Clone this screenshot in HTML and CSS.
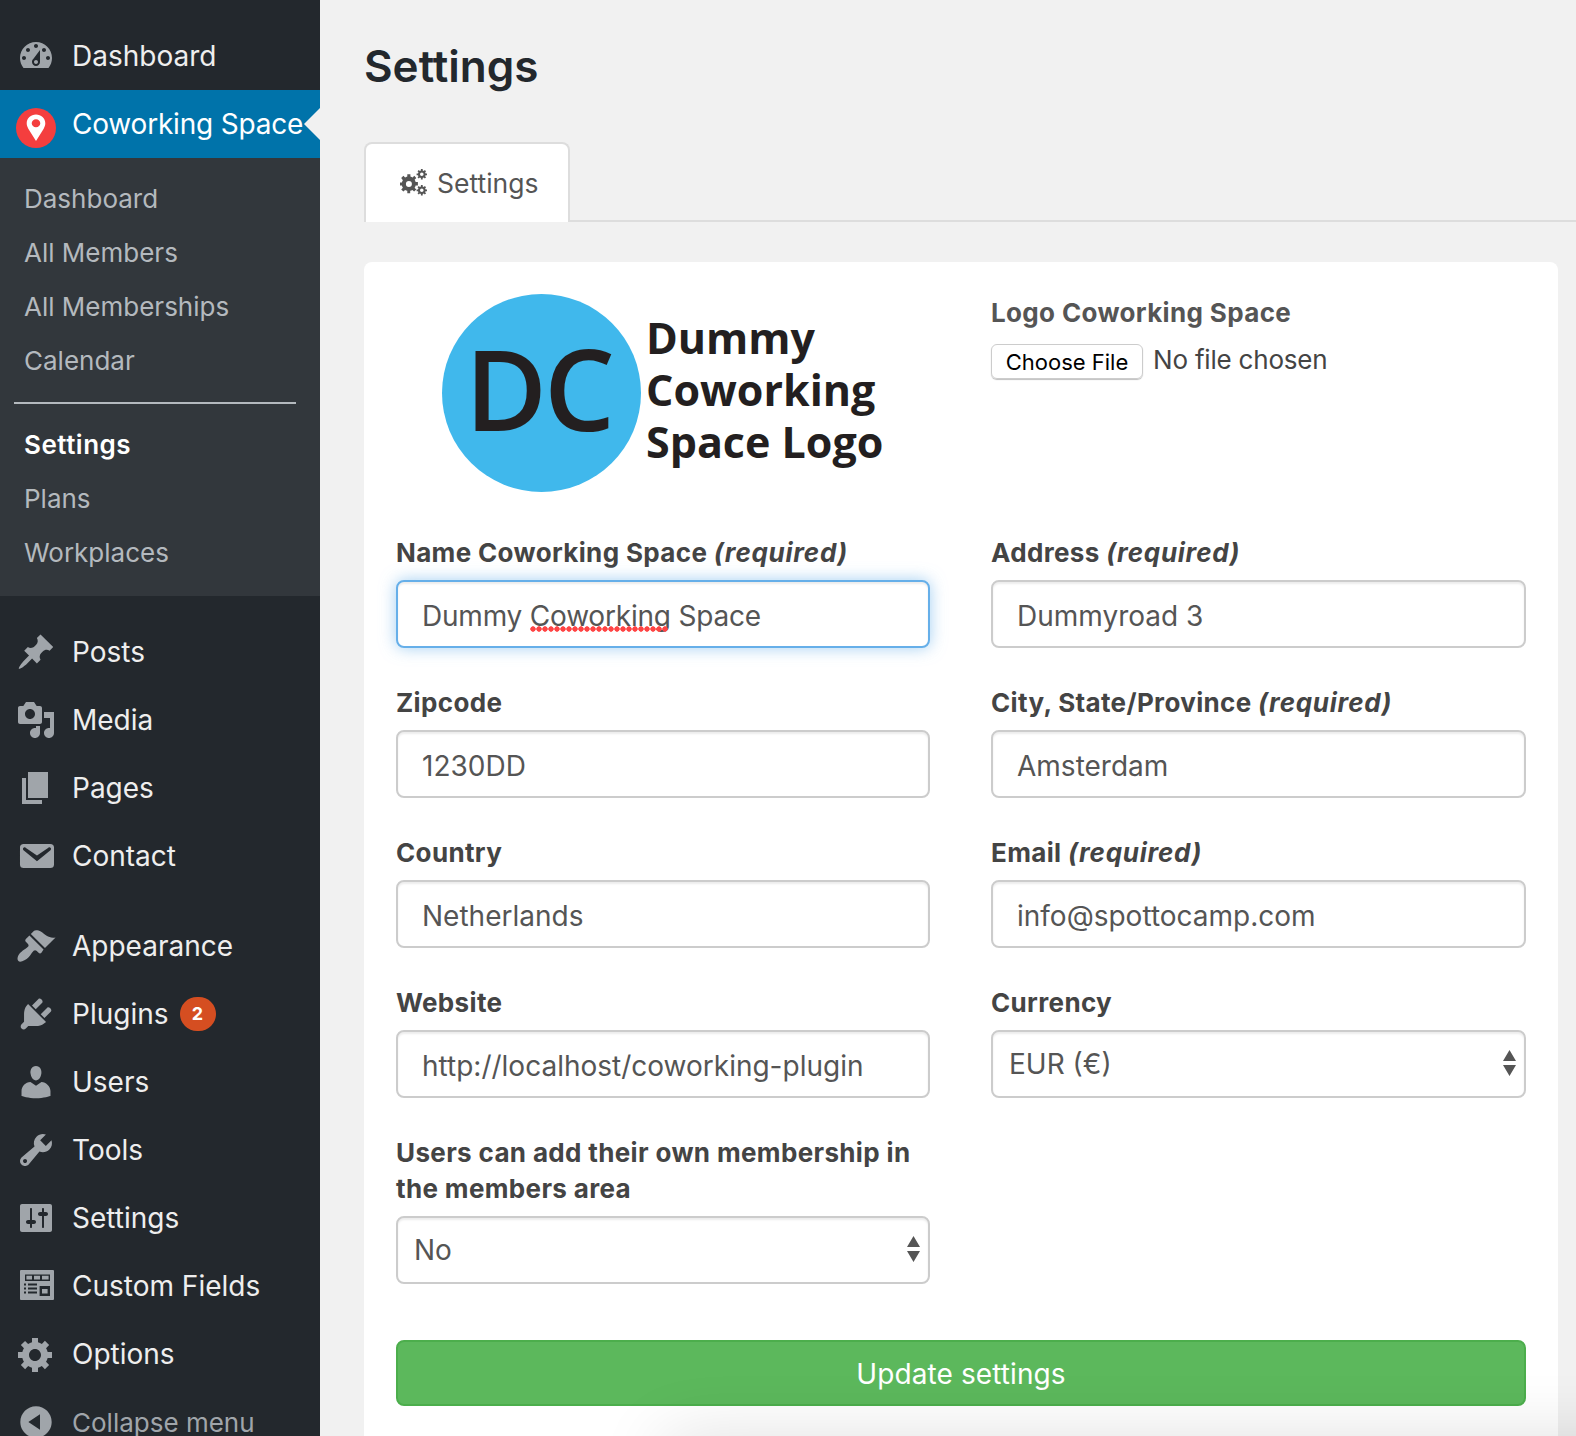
FILE: index.html
```html
<!DOCTYPE html>
<html lang="en">
<head>
    <meta charset="UTF-8">
    <title>Settings - Coworking Space</title>
    <link rel="stylesheet" href="styles.css">
</head>
<body>
    <nav class="sidebar">
        <a class="menu-item">
            <svg class="menu-icon" viewBox="0 0 20 20"><path fill-rule="evenodd" d="M3.76 16h12.48c1.1-1.37 1.76-3.11 1.76-5 0-4.42-3.58-8-8-8s-8 3.58-8 8c0 1.89.66 3.63 1.76 5zM10 4c.55 0 1 .45 1 1s-.45 1-1 1-1-.45-1-1 .45-1 1-1zM6 6c.55 0 1 .45 1 1s-.45 1-1 1-1-.45-1-1 .45-1 1-1zm8 0c.55 0 1 .45 1 1s-.45 1-1 1-1-.45-1-1 .45-1 1-1zm-5.37 5.55L12 7v6c0 1.1-.9 2-2 2s-2-.9-2-2c0-.57.24-1.08.63-1.45zM4 10c.55 0 1 .45 1 1s-.45 1-1 1-1-.45-1-1 .45-1 1-1zm12 0c.55 0 1 .45 1 1s-.45 1-1 1-1-.45-1-1 .45-1 1-1zm-5 3c0-.55-.45-1-1-1s-1 .45-1 1 .45 1 1 1 1-.45 1-1z"/></svg>
            Dashboard
        </a>
        <a class="menu-item active">
            <svg class="menu-icon pin-icon" viewBox="0 0 40 40"><circle class="pin-bg" cx="20" cy="20" r="20"/><path class="pin" fill-rule="evenodd" d="M20 6.500c-5.100 0-9.300 3.900-9.300 8.800 0 2 .7 3.700 1.600 5.400L20 33l7.700-12.300c.9-1.700 1.600-3.400 1.600-5.400 0-4.900-4.200-8.800-9.300-8.800zm0 4.700c2.400 0 4.300 1.800 4.300 4s-1.900 4-4.300 4-4.300-1.800-4.300-4 1.900-4 4.300-4z"/></svg>
            Coworking Space
        </a>
        <div class="submenu">
            <a class="sub-item">Dashboard</a>
            <a class="sub-item">All Members</a>
            <a class="sub-item">All Memberships</a>
            <a class="sub-item">Calendar</a>
            <div class="sub-divider"></div>
            <a class="sub-item current">Settings</a>
            <a class="sub-item">Plans</a>
            <a class="sub-item">Workplaces</a>
        </div>
        <div class="menu-group">
            <a class="menu-item">
                <svg class="menu-icon" viewBox="0 0 20 20"><path d="M10.44 3.02l1.82-1.820 6.360 6.350-1.830 1.820c-1.050-.68-2.480-.57-3.410.36l-.75.75c-.92.93-1.040 2.350-.35 3.410l-1.830 1.820-2.410-2.410-2.800 2.790c-.42.42-3.380 2.710-3.800 2.290s1.860-3.390 2.280-3.810l2.790-2.790L4.100 9.360l1.830-1.820c1.050.69 2.480.57 3.400-.36l.75-.75c.93-.92 1.050-2.350.36-3.410z"/></svg>
                Posts
            </a>
            <a class="menu-item">
                <svg class="menu-icon" viewBox="0 0 20 20"><path fill-rule="evenodd" d="M13 11V4c0-.55-.45-1-1-1h-1.670L9 1H5L3.670 3H2c-.55 0-1 .45-1 1v7c0 .55.45 1 1 1h10c.55 0 1-.45 1-1zM7 4.500c1.380 0 2.500 1.120 2.500 2.500S8.380 9.500 7 9.500 4.500 8.380 4.500 7 5.620 4.500 7 4.500zM14 6h5v10.500c0 1.380-1.120 2.500-2.500 2.500S14 17.880 14 16.500s1.120-2.500 2.500-2.500c.17 0 .34.02.5.05V9h-3V6zm-4 8.050V13h2v3.500c0 1.380-1.120 2.500-2.500 2.500S7 17.880 7 16.500 8.120 14 9.500 14c.17 0 .34.02.5.05z"/></svg>
                Media
            </a>
            <a class="menu-item">
                <svg class="menu-icon" viewBox="0 0 20 20"><path d="M6 15V2h10v13H6zm-1 1h8v2H3V5h2v11z"/></svg>
                Pages
            </a>
            <a class="menu-item">
                <svg class="menu-icon" viewBox="0 0 20 20"><path d="M3.870 4h13.250C18.370 4 19 4.590 19 5.790v8.420c0 1.190-.63 1.790-1.880 1.790H3.870c-1.250 0-1.880-.6-1.880-1.790V5.790c0-1.200.63-1.790 1.880-1.790zm6.620 8.600l6.740-5.530c.24-.2.43-.66.13-1.070-.29-.41-.82-.42-1.170-.17l-5.700 3.860L4.800 5.830c-.35-.25-.88-.24-1.170.17-.3.41-.11.87.13 1.070z"/></svg>
                Contact
            </a>
        </div>
        <div class="menu-group">
            <a class="menu-item">
                <svg class="menu-icon" viewBox="0 0 20 20"><path d="M14.480 11.060L7.410 3.990l1.500-1.500c.5-.56 2.300-.47 3.510.32 1.210.8 1.430 1.280 2.910 2.100 1.180.64 2.450 1.260 4.450.85zm-.71.71L6.700 4.700 4.930 6.470c-.39.39-.39 1.020 0 1.410l1.060 1.060c.39.39.39 1.030 0 1.420-.6.6-1.430 1.110-2.210 1.690-.35.26-.7.53-1.010.84C1.430 13.710.05 16.360 1.200 17.510c.96.96 3.600-.42 5.100-1.920.31-.31.58-.66.84-1.010.58-.78 1.090-1.610 1.690-2.210.39-.39 1.020-.39 1.410 0l1.060 1.060c.39.39 1.020.39 1.410 0z"/></svg>
                Appearance
            </a>
            <a class="menu-item">
                <svg class="menu-icon" viewBox="0 0 20 20"><path d="M13.110 4.360L9.870 7.600 8 5.730l3.240-3.240c.35-.34 1.050-.2 1.560.32.52.51.66 1.210.31 1.550zm-8 1.770l.91-1.120 9.010 9.010-1.190.84c-.71.71-2.630 1.160-3.820 1.160H6.140L4.900 17.260c-.59.59-1.540.59-2.120 0-.59-.58-.59-1.530 0-2.120l1.240-1.240v-3.880c0-1.130.4-3.190 1.090-3.890zm7.260 3.970l3.240-3.240c.34-.35 1.040-.21 1.550.31.52.51.66 1.210.31 1.550l-3.240 3.250z"/></svg>
                Plugins <span class="badge">2</span>
            </a>
            <a class="menu-item">
                <svg class="menu-icon" viewBox="0 0 20 20"><path d="M10 9.250c-2.270 0-2.730-3.440-2.730-3.440C7 4.020 7.820 2 9.970 2c2.160 0 2.980 2.020 2.710 3.810 0 0-.41 3.440-2.680 3.440zm0 2.570L12.720 10c2.390 0 4.520 2.330 4.520 4.530v2.490s-3.650 1.130-7.240 1.130c-3.650 0-7.240-1.130-7.240-1.130v-2.490c0-2.250 1.940-4.480 4.470-4.480z"/></svg>
                Users
            </a>
            <a class="menu-item">
                <svg class="menu-icon" viewBox="0 0 20 20"><path fill-rule="evenodd" d="M16.680 9.770c-1.340 1.340-3.300 1.670-4.950.99l-5.410 6.520c-.99.99-2.590.99-3.580 0s-.99-2.590 0-3.570l6.520-5.420c-.68-1.650-.35-3.610.99-4.950 1.280-1.280 3.120-1.620 4.720-1.060l-2.890 2.890 2.820 2.820 2.860-2.870c.53 1.580.18 3.390-1.080 4.650zM3.810 16.210c.4.39 1.040.39 1.430 0 .4-.4.4-1.040 0-1.430-.39-.4-1.030-.4-1.430 0-.39.39-.39 1.030 0 1.430z"/></svg>
                Tools
            </a>
            <a class="menu-item">
                <svg class="menu-icon" viewBox="0 0 20 20"><path fill-rule="evenodd" d="M18 16V4c0-.55-.45-1-1-1H3c-.55 0-1 .45-1 1v12c0 .55.45 1 1 1h14c.55 0 1-.45 1-1zM8 11h1c.55 0 1 .45 1 1s-.45 1-1 1H8v1.500c0 .28-.22.5-.5.5s-.5-.22-.5-.5V13H6c-.55 0-1-.45-1-1s.45-1 1-1h1V5.500c0-.28.22-.5.5-.5s.5.22.5.5V11zm5-2h-1c-.55 0-1-.45-1-1s.45-1 1-1h1V5.500c0-.28.22-.5.5-.5s.5.22.5.5V7h1c.55 0 1 .45 1 1s-.45 1-1 1h-1v5.500c0 .28-.22.5-.5.5s-.5-.22-.5-.5V9z"/></svg>
                Settings
            </a>
            <a class="menu-item">
                <svg class="menu-icon" viewBox="0 0 20 20"><path fill-rule="evenodd" d="M2.500 2h16a.5.5 0 0 1 .5.5v14a.5.5 0 0 1-.5.5h-16a.5.5 0 0 1-.5-.5v-14a.5.5 0 0 1 .5-.5zM4.500 4.200v3.300H17V4.200zm.7.7h2.800v1.900H5.200zm3.800 0h3v1.900H9zm4 0h3.300v1.900H13zM4 8.800v.9h1v-.9zm2 0v.9h4.500v-.9zM4 10.800v.9h1v-.9zm2 0v.9h4.500v-.9zM4 12.800v.9h1v-.9zm2 0v.9h4.500v-.9zM11.800 10v5H17v-5zm1.200 1.500h2.800v2.200H13z"/></svg>
                Custom Fields
            </a>
            <a class="menu-item">
                <svg class="menu-icon" viewBox="0 0 20 20"><path fill-rule="evenodd" d="M18 12h-2.180c-.17.7-.44 1.350-.81 1.930l1.540 1.540-2.100 2.100-1.540-1.540c-.58.36-1.230.63-1.910.79V19H8v-2.180c-.68-.16-1.330-.43-1.910-.79l-1.540 1.540-2.120-2.120 1.540-1.540c-.36-.58-.63-1.230-.79-1.910H1V9.030h2.170c.16-.7.44-1.350.8-1.940L2.430 5.550l2.100-2.100 1.540 1.540c.58-.37 1.240-.64 1.930-.81V2h3v2.180c.68.16 1.330.43 1.910.79l1.540-1.540 2.120 2.120-1.540 1.540c.36.59.64 1.240.8 1.940H18V12zm-8.500 1.500c1.660 0 3-1.340 3-3s-1.340-3-3-3-3 1.340-3 3 1.340 3 3 3z"/></svg>
                Options
            </a>
            <a class="menu-item collapse">
                <svg class="menu-icon" viewBox="0 0 20 20"><path fill-rule="evenodd" d="M10 2.160c4.330 0 7.840 3.510 7.840 7.840s-3.510 7.840-7.840 7.840S2.160 14.330 2.160 10 5.710 2.160 10 2.160zm2 11.720V6.120L6.180 9.970z"/></svg>
                Collapse menu
            </a>
        </div>
    </nav>

    <main class="content">
        <h1 class="page-title">Settings</h1>

        <div class="tabs">
            <a class="tab">
                <svg class="tab-icon" viewBox="0 0 28 28">
                    <path fill-rule="evenodd" d="M17.900 16.500h-2.300c-.2.900-.5 1.600-1 2.200l1.700 1.700-2.200 2.200-1.700-1.700c-.6.400-1.400.7-2.200.9v2.400H7.300v-2.400c-.8-.2-1.600-.5-2.200-.9l-1.700 1.700-2.200-2.200 1.700-1.700c-.5-.6-.8-1.300-1-2.200H0v-3.100h1.900c.2-.8.5-1.600 1-2.200L1.200 9l2.200-2.200 1.700 1.700c.6-.4 1.400-.7 2.200-.9V5.300h3.100v2.300c.8.2 1.600.5 2.200.9l1.700-1.700L16.300 9l-1.700 1.700c.5.600.8 1.400 1 2.200h2.300zM8.900 18a3 3 0 1 0 0-6 3 3 0 0 0 0 6z"/>
                    <path fill-rule="evenodd" d="M27 6.200h-1.400c-.1.400-.3.800-.5 1.100l1 1-1.300 1.300-1-1c-.3.200-.7.400-1.100.5v1.400h-1.800V9.100c-.4-.1-.8-.3-1.100-.5l-1 1-1.300-1.300 1-1c-.2-.3-.4-.7-.5-1.100h-1.400V4.400h1.400c.1-.4.300-.8.500-1.100l-1-1L18.800 1l1 1c.3-.2.7-.4 1.100-.5V.1h1.800v1.400c.4.1.8.300 1.100.5l1-1 1.300 1.300-1 1c.2.300.4.700.5 1.100H27zm-5.200.9a1.800 1.800 0 1 0 0-3.600 1.800 1.800 0 0 0 0 3.600z"/>
                    <path fill-rule="evenodd" d="M27 22.200h-1.400c-.1.400-.3.800-.5 1.100l1 1-1.300 1.300-1-1c-.3.200-.7.400-1.100.5v1.400h-1.800v-1.400c-.4-.1-.8-.3-1.100-.5l-1 1-1.300-1.300 1-1c-.2-.3-.4-.7-.5-1.100h-1.400v-1.800h1.400c.1-.4.300-.8.500-1.100l-1-1 1.300-1.300 1 1c.3-.2.7-.4 1.100-.5v-1.400h1.800v1.400c.4.1.8.300 1.100.5l1-1 1.300 1.300-1 1c.2.300.4.700.5 1.100H27zm-5.200.9a1.800 1.800 0 1 0 0-3.600 1.800 1.800 0 0 0 0 3.600z"/>
                </svg>
                Settings
            </a>
        </div>

        <form class="card">
            <div class="form-grid">
                <div class="logo">
                    <div class="logo-mark">DC</div>
                    <div class="logo-text">Dummy<br>Coworking<br>Space Logo</div>
                </div>
                <div class="field field-logo">
                    <label>Logo Coworking Space</label>
                    <div class="file-row">
                        <span class="file-button">Choose File</span>
                        <span class="file-name">No file chosen</span>
                    </div>
                </div>

                <div class="field">
                    <label>Name Coworking Space <em>(required)</em></label>
                    <div class="control">
                        <input class="focused" type="text" value="Dummy Coworking Space">
                        <span class="squiggle"></span>
                    </div>
                </div>
                <div class="field">
                    <label>Address <em>(required)</em></label>
                    <input type="text" value="Dummyroad 3">
                </div>

                <div class="field">
                    <label>Zipcode</label>
                    <input type="text" value="1230DD">
                </div>
                <div class="field">
                    <label>City, State/Province <em>(required)</em></label>
                    <input type="text" value="Amsterdam">
                </div>

                <div class="field">
                    <label>Country</label>
                    <input type="text" value="Netherlands">
                </div>
                <div class="field">
                    <label>Email <em>(required)</em></label>
                    <input type="text" value="info@spottocamp.com">
                </div>

                <div class="field">
                    <label>Website</label>
                    <input type="text" value="http://localhost/coworking-plugin">
                </div>
                <div class="field">
                    <label>Currency</label>
                    <div class="control">
                        <select><option>EUR (€)</option></select>
                        <svg class="select-arrows" viewBox="0 0 13 26"><path d="M6.500 0L13 11H0zM0 15h13L6.500 26z"/></svg>
                    </div>
                </div>

                <div class="field">
                    <label>Users can add their own membership in the members area</label>
                    <div class="control">
                        <select><option>No</option></select>
                        <svg class="select-arrows" viewBox="0 0 13 26"><path d="M6.500 0L13 11H0zM0 15h13L6.500 26z"/></svg>
                    </div>
                </div>
            </div>

            <button type="button" class="submit-btn">Update settings</button>
        </form>
    </main>
    <div class="window-shade"></div>
</body>
</html>
```

FILE: styles.css
```css
* {
    box-sizing: border-box;
}
html, body {
    height: 1436px;
    overflow: hidden;
}
body {
    position: relative;
    margin: 0;
    display: flex;
    background: #f1f1f1;
    font-family: Inter, "Liberation Sans", sans-serif;
    color: #444;
}

/* sidebar */
.sidebar {
    width: 320px;
    height: 1436px;
    overflow: hidden;
    flex: none;
    background: #23282d;
    padding-top: 22px;
}
.menu-item {
    position: relative;
    display: flex;
    align-items: center;
    height: 68px;
    padding-left: 16px;
    font-size: 28px;
    color: #eee;
    white-space: nowrap;
}
.menu-icon {
    width: 40px;
    height: 40px;
    margin-right: 16px;
    fill: #a0a5aa;
    flex: none;
}
.pin-icon {
    margin-top: 8px;
}
.menu-item.active {
    background: #0073aa;
    color: #fff;
    letter-spacing: -0.2px;
}
.menu-item.active::after {
    content: "";
    position: absolute;
    right: 0;
    top: 18px;
    border: 16px solid transparent;
    border-left: 0;
    border-right-color: #f1f1f1;
}
.pin-bg {
    fill: #f43e3e;
}
.pin {
    fill: #fff;
}
.menu-item.collapse {
    color: #a0a5aa;
    font-size: 26px;
}
.menu-group {
    margin-top: 22px;
}
.badge {
    display: inline-block;
    width: 36px;
    height: 34px;
    margin-left: 11px;
    border-radius: 17px;
    background: #d54e21;
    color: #fff;
    font-size: 18px;
    font-weight: 700;
    line-height: 34px;
    text-align: center;
}
.submenu {
    background: #32373c;
    padding: 14px 0 16px;
}
.sub-item {
    display: block;
    height: 54px;
    padding-left: 24px;
    font-size: 26px;
    line-height: 54px;
    color: #b4b9be;
}
.sub-item.current {
    color: #fff;
    font-weight: 600;
    letter-spacing: 0.5px;
}
.sub-divider {
    height: 2px;
    margin: 14px 24px 14px 14px;
    background: #b4b9be;
}

/* main */
.content {
    flex: 1;
    min-width: 0;
    padding: 0 18px 0 44px;
}
.page-title {
    margin: 0;
    padding-top: 36px;
    height: 142px;
    font-size: 44px;
    line-height: 60px;
    font-weight: 600;
    color: #23282d;
}
.tabs {
    display: flex;
    height: 80px;
    margin-right: -18px;
    border-bottom: 2px solid #ddd;
}
.tab {
    display: flex;
    align-items: center;
    flex: none;
    gap: 9px;
    width: 206px;
    height: 80px;
    padding-left: 34px;
    background: #fff;
    border: 2px solid #ddd;
    border-bottom: 0;
    border-radius: 8px 8px 0 0;
    font-size: 26.5px;
    color: #555;
}
.tab-icon {
    width: 28px;
    height: 28px;
    fill: #555;
}
.card {
    height: 1174px;
    margin-top: 40px;
    padding: 20px 32px;
    background: #fff;
    border-radius: 8px 8px 0 0;
}
/* soft shadow of another window, comes in from the bottom edge */
.window-shade {
    position: absolute;
    left: 665px;
    right: -100px;
    top: 1440px;
    height: 60px;
    box-shadow: 0 0 70px rgba(0, 0, 0, 0.14);
}
.form-grid {
    display: grid;
    grid-template-columns: 534px 535px;
    column-gap: 61px;
    row-gap: 37px;
}
.logo {
    display: flex;
    align-items: center;
    gap: 5px;
    height: 198px;
    margin: 12px 0 6px 46px;
}
.logo-mark {
    width: 199px;
    height: 198px;
    flex: none;
    border-radius: 50%;
    background: #40b8ec;
    color: #231f20;
    font-family: "Open Sans", sans-serif;
    font-size: 112px;
    font-weight: 600;
    line-height: 188px;
    text-align: center;
    letter-spacing: -3px;
    padding-right: 6px;
}
.logo-text {
    margin-top: -6px;
    font-family: "Open Sans", sans-serif;
    font-size: 43px;
    font-weight: 700;
    line-height: 52px;
    color: #231f20;
}
.field-logo {
    padding-top: 13px;
}
.field label {
    display: block;
    margin-bottom: 9px;
    font-size: 26px;
    font-weight: 700;
    line-height: 36px;
    letter-spacing: 0.35px;
}
.field label em {
    letter-spacing: 0.7px;
}
.field-logo label {
    color: #555;
}
.file-row {
    display: flex;
    align-items: center;
    gap: 10px;
    margin-top: 13px;
}
.file-button {
    width: 152px;
    height: 35px;
    border: 1px solid #ccc;
    border-radius: 6px;
    box-shadow: 0 1px 1px rgba(0, 0, 0, 0.25);
    font-size: 22px;
    line-height: 35px;
    text-align: center;
    color: #000;
}
.file-name {
    font-size: 26px;
    letter-spacing: -0.2px;
    color: #444;
    margin-top: -4px;
}
.control {
    position: relative;
}
input, select {
    display: block;
    width: 100%;
    height: 68px;
    background: #fff;
    border: 2px solid #ccc;
    border-radius: 8px;
    box-shadow: inset 0 2px 2px rgba(0, 0, 0, 0.075);
    font-family: inherit;
    font-size: 28px;
    color: #555;
    outline: none;
}
input {
    padding: 3px 24px 0;
}
select {
    padding: 0 16px;
    appearance: none;
}
input.focused {
    border-color: #66afe9;
    box-shadow: inset 0 2px 2px rgba(0, 0, 0, 0.075), 0 0 16px rgba(102, 175, 233, 0.6);
    letter-spacing: -0.2px;
}
.squiggle {
    position: absolute;
    left: 134px;
    top: 46px;
    width: 138px;
    height: 6px;
    background: radial-gradient(circle at 3px 3px, #f44 2.4px, transparent 3px) 0 0 / 6px 6px repeat-x;
}
.select-arrows {
    position: absolute;
    right: 10px;
    top: 20px;
    width: 13px;
    height: 26px;
    fill: #555;
}
.submit-btn {
    display: block;
    width: 100%;
    height: 66px;
    margin-top: 56px;
    padding-top: 2px;
    background: #5cb85c;
    border: 2px solid #4cae4c;
    border-radius: 8px;
    font-family: inherit;
    font-size: 28px;
    letter-spacing: 0.1px;
    color: #fff;
}
```
